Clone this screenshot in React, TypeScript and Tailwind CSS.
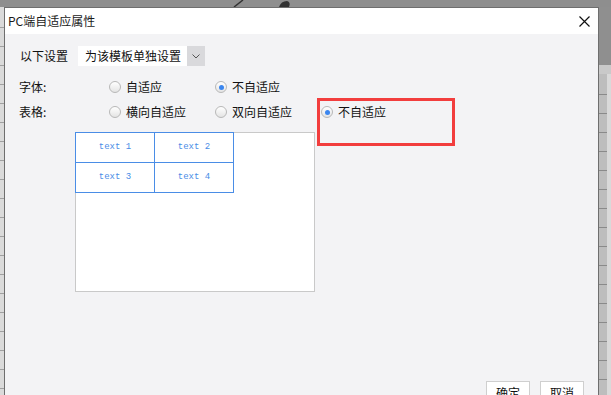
import React from "react";

const CJK = "font-['Noto_Sans_CJK_SC','Noto_Sans',sans-serif]";

function Radio({ checked, label }: { checked?: boolean; label: string }) {
  return (
    <div className="flex items-center gap-[5px]">
      <span className="w-[12px] h-[12px] rounded-full border border-[#b8b8b8] bg-gradient-to-b from-white to-[#e4e4e4] flex items-center justify-center shrink-0">
        {checked && <span className="w-[5px] h-[5px] rounded-full bg-[#3b86ef]" />}
      </span>
      <span className="text-[12px] leading-none text-[#111]">{label}</span>
    </div>
  );
}

const ROWS = Array.from({ length: 22 });

export default function App() {
  return (
    <div className={`relative w-[611px] h-[395px] overflow-hidden flex flex-col bg-[#d6d6d6] ${CJK}`}>
      {/* backdrop top strip */}
      <div className="h-[7px] shrink-0 bg-[#8e8e8e] relative">
        <svg width="611" height="7" viewBox="0 0 611 7" className="absolute inset-0">
          <line x1="234" y1="7" x2="243" y2="0" stroke="#333" strokeWidth="1.5" />
          <path d="M279 7 Q281 1 287 1 Q291 2 289 7 Z" fill="#333" />
        </svg>
      </div>

      <div className="flex flex-1 min-h-0">
        {/* left spreadsheet strip */}
        <div className="w-[4px] shrink-0 bg-[#dadada] flex flex-col pt-[2px]">
          {ROWS.map((_, i) => (
            <div key={i} className="h-[19px] shrink-0 border-b border-[#a0a0a0]" />
          ))}
        </div>

        {/* dialog */}
        <div className="w-[595px] h-[420px] shrink-0 flex flex-col border-l border-r border-t border-[#6e6e6e]">
          <div className="h-[26px] shrink-0 bg-white flex items-center justify-between pl-[3px] pr-[8px]">
            <span className="text-[12px] text-[#1a1a1a]">PC端自适应属性</span>
            <svg width="11" height="11" viewBox="0 0 11 11">
              <path d="M0.5 0.5 L10.5 10.5 M10.5 0.5 L0.5 10.5" stroke="#111" strokeWidth="1.2" />
            </svg>
          </div>

          <div className="flex-1 bg-[#f3f3f5] flex flex-col pl-[15px] pt-[12px]">
            <div className="flex items-center h-[20px]">
              <span className="w-[58px] text-[12px] text-[#111] leading-none">以下设置</span>
              <div className="flex h-[20px] w-[127px] bg-white">
                <span className="flex-1 flex items-center pl-[7px] text-[12px] text-[#111] leading-none">为该模板单独设置</span>
                <span className="w-[18px] bg-[#d9d9dc] flex items-center justify-center">
                  <svg width="8" height="5" viewBox="0 0 8 5">
                    <path d="M0.5 0.5 L4 4 L7.5 0.5" fill="none" stroke="#555" strokeWidth="1" />
                  </svg>
                </span>
              </div>
            </div>

            <div className="grid grid-cols-[90px_106px_106px_106px] items-center h-[20px] mt-[11px] -ml-[1px]">
              <span className="text-[12px] text-[#111] leading-none">字体:</span>
              <Radio label="自适应" />
              <Radio checked label="不自适应" />
            </div>

            <div className="grid grid-cols-[90px_106px_106px_106px] items-center h-[20px] mt-[5px] -ml-[1px]">
              <span className="text-[12px] text-[#111] leading-none">表格:</span>
              <Radio label="横向自适应" />
              <Radio label="双向自适应" />
              <Radio checked label="不自适应" />
            </div>

            <div className="mt-[10px] ml-[55px] w-[240px] h-[160px] bg-white border border-[#c9c9c9]">
              <div className="grid grid-cols-[79px_79px] w-[159px] -ml-[1px] -mt-[1px] border-l border-t border-[#4a8de6] font-['Liberation_Mono',monospace] text-[9px] text-[#4a8de6]">
                {["text 1", "text 2", "text 3", "text 4"].map((t) => (
                  <div key={t} className="h-[30px] flex items-center justify-center border-r border-b border-[#4a8de6]">
                    {t}
                  </div>
                ))}
              </div>
            </div>

            <div className="flex justify-end gap-[10px] pr-[14px] mt-[89px]">
              <button className="w-[44px] h-[24px] bg-white border border-[#cfcfcf] text-[12px] text-[#111] leading-none">确定</button>
              <button className="w-[44px] h-[24px] bg-white border border-[#cfcfcf] text-[12px] text-[#111] leading-none">取消</button>
            </div>
          </div>
        </div>

        {/* right spreadsheet strip */}
        <div className="flex-1 flex flex-col">
          <div className="h-[58px] shrink-0 bg-[#8f8f8f]" />
          <div className="h-[9px] shrink-0 bg-[#c9c9c9]" />
          <div className="flex-1 flex">
            <div className="w-[8px] bg-[#bdbdbd] flex flex-col pt-[2px]">
              {ROWS.map((_, i) => (
                <div key={i} className="h-[19px] shrink-0 border-b border-[#8a8a8a]" />
              ))}
            </div>
            <div className="flex-1 bg-[#d9d9d9]" />
          </div>
        </div>
      </div>

      {/* red annotation box */}
      <div className="absolute left-[317px] top-[98px] w-[138px] h-[48px] border-[3px] border-[#f23d3d]" />
    </div>
  );
}
